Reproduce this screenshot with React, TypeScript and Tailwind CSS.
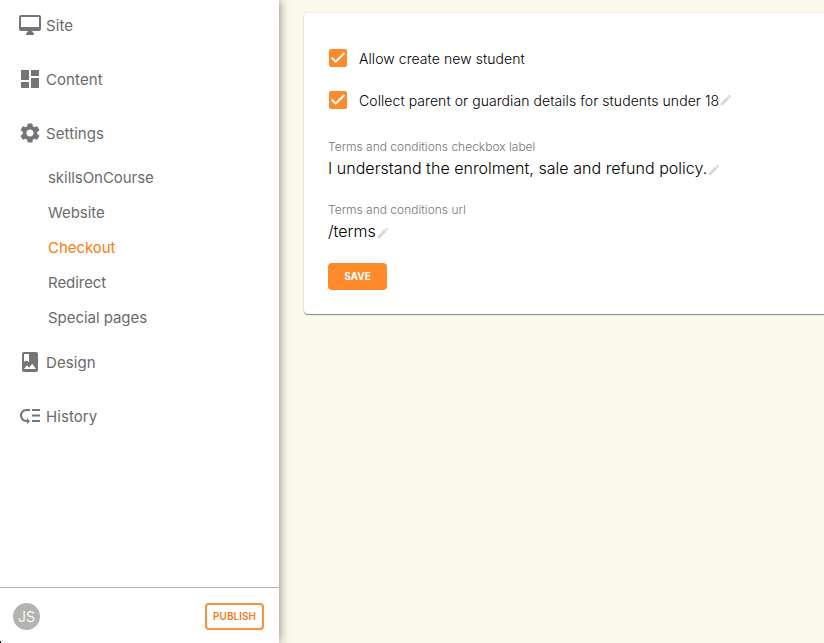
import React from "react";
import { MdDashboard, MdEdit, MdLowPriority, MdSettings } from "react-icons/md";

type IconComponent = React.ComponentType<{ className?: string }>;

function MonitorIcon({ className }: { className?: string }) {
  return (
    <svg viewBox="0 0 24 24" fill="currentColor" className={className}>
      <path d="M21 2H3c-1.1 0-2 .9-2 2v12c0 1.1.9 2 2 2h7l-2 3v1h8v-1l-2-3h7c1.1 0 2-.9 2-2V4c0-1.1-.9-2-2-2zm0 12H3V4h18v10z" />
    </svg>
  );
}

function AlbumIcon({ className }: { className?: string }) {
  return (
    <svg viewBox="0 0 24 24" fill="currentColor" className={className}>
      <path d="M18 2H6c-1.1 0-2 .9-2 2v16c0 1.1.9 2 2 2h12c1.1 0 2-.9 2-2V4c0-1.1-.9-2-2-2zM6 4h5v8l-2.5-1.5L6 12V4zm0 15l3-3.86 2.14 2.58 3-3.86L18 19H6z" />
    </svg>
  );
}

function NavItem({ icon: Icon, label }: { icon: IconComponent; label: string }) {
  return (
    <a className="flex h-[54px] items-center pl-[18px]">
      <Icon className="mb-0.5 size-6 shrink-0 text-[#757575]" />
      <span className="ml-1 tracking-[0.08px]">{label}</span>
    </a>
  );
}

const subItems = ["skillsOnCourse", "Website", "Checkout", "Redirect", "Special pages"];

function CheckRow({ label, editable }: { label: string; editable?: boolean }) {
  return (
    <label className="flex h-[42px] items-center">
      <span className="mb-0.5 ml-px flex size-[18px] items-center justify-center rounded-[2px] bg-[#ff8a2c]">
        <svg viewBox="0 0 18 18" className="size-[18px]" fill="none" stroke="white" strokeWidth="2">
          <path d="M2.6 8.5 6.7 12.6 15.3 4" />
        </svg>
      </span>
      <span className="mb-0.5 ml-3 text-[14px] tracking-[0.07px]">{label}</span>
      {editable && <MdEdit className="mb-[2px] size-[14px] text-[#d9d9d9]" />}
    </label>
  );
}

function Field({ label, value }: { label: string; value: string }) {
  return (
    <div className="h-[63px]">
      <div className="text-[12px] leading-[18px] text-[#757575]">{label}</div>
      <div className="flex h-[24px] items-center text-[16px] tracking-[0.035px]">
        <span>{value}</span>
        <MdEdit className="mt-[3px] size-[14px] text-[#d9d9d9]" />
      </div>
    </div>
  );
}

export default function App() {
  return (
    <div className="flex h-[643px] w-full overflow-hidden bg-[#fbf8ec] font-['Inter',sans-serif]">
      <aside className="relative z-10 flex w-[279px] shrink-0 flex-col bg-white text-[15px] text-[#6b6b6b] shadow-[0_0_10px_rgba(0,0,0,0.5)]">
        <nav className="-mt-px flex-1">
          <NavItem icon={MonitorIcon} label="Site" />
          <NavItem icon={MdDashboard} label="Content" />
          <NavItem icon={MdSettings} label="Settings" />
          <ul className="pl-12 tracking-[-0.05px]">
            {subItems.map((item) => (
              <li key={item} className={`flex h-[35px] items-center ${item === "Checkout" ? "text-[#ff7a0f]" : ""}`}>
                {item}
              </li>
            ))}
          </ul>
          <NavItem icon={AlbumIcon} label="Design" />
          <NavItem icon={MdLowPriority} label="History" />
        </nav>
        <footer className="flex h-14 items-center justify-between border-t border-[#b5b5b5] pt-[2px] pr-[15px] pl-[13px]">
          <span className="flex size-[27px] items-center justify-center rounded-full bg-[#b3b3b3] text-[14px] text-[#fbf8ec]">JS</span>
          <button className="flex h-[27px] w-[59px] items-center justify-center rounded-[4px] border-2 border-[#ff8f3d] text-[10px] font-semibold text-[#ff7a1a]">
            PUBLISH
          </button>
        </footer>
        <span className="absolute bottom-0 left-0 h-[2px] w-px bg-black" />
      </aside>
      <main className="min-w-0 flex-1 pt-[13px] pl-[25px]">
        <section className="h-[301px] w-[600px] rounded-[4px] bg-white pt-[25px] pl-6 font-light text-black shadow-[0_1px_1px_rgba(0,0,0,0.45),0_0_2px_rgba(0,0,0,0.12)]">
          <CheckRow label="Allow create new student" />
          <CheckRow label="Collect parent or guardian details for students under 18" editable />
          <div className="mt-4">
            <Field label="Terms and conditions checkbox label" value="I understand the enrolment, sale and refund policy." />
            <Field label="Terms and conditions url" value="/terms" />
          </div>
          <button className="-mt-px flex h-[27px] w-[59px] items-center justify-center rounded-[4px] bg-[#ff8a2c] text-[10px] font-bold text-white">
            SAVE
          </button>
        </section>
      </main>
    </div>
  );
}
